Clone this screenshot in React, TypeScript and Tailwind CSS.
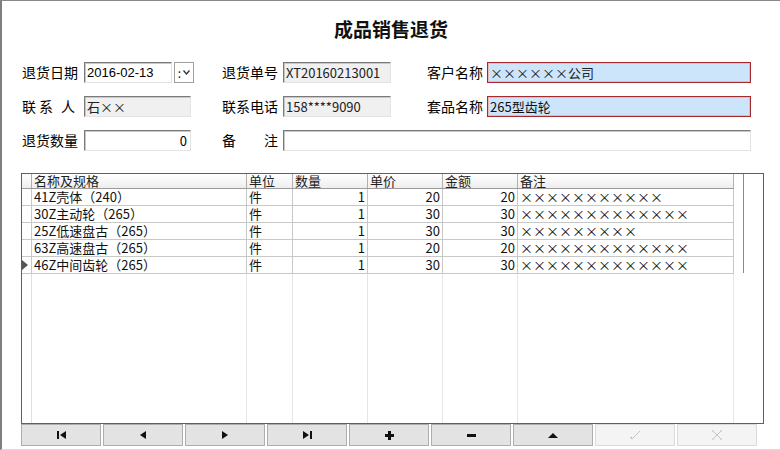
import React from "react";

const cols = [
  { w: "w-[215px]", align: "text-left" },
  { w: "w-[46px]", align: "text-left" },
  { w: "w-[75px]", align: "text-right" },
  { w: "w-[75px]", align: "text-right" },
  { w: "w-[75px]", align: "text-right" },
  { w: "w-[216px]", align: "text-left" },
];

const headers = ["名称及规格", "单位", "数量", "单价", "金额", "备注"];

const rows = [
  ["41Z壳体（240）", "件", "1", "20", "20", "×××××××××××"],
  ["30Z主动轮（265）", "件", "1", "30", "30", "×××××××××××××"],
  ["25Z低速盘古（265）", "件", "1", "30", "30", "×××××××××"],
  ["63Z高速盘古（265）", "件", "1", "20", "20", "×××××××××××××"],
  ["46Z中间齿轮（265）", "件", "1", "30", "30", "×××××××××××××"],
];

const sunken =
  "h-[21px] border border-t-[#7a7a7a] border-l-[#7a7a7a] border-r-[#e3e3e3] border-b-[#e3e3e3] shadow-[inset_1px_1px_0_#c8c8c8] text-[13px] leading-[19px] px-[2px] whitespace-nowrap";

function Label({ children, className = "" }: { children: React.ReactNode; className?: string }) {
  return (
    <div className={`w-[56px] shrink-0 text-[14px] leading-[21px] text-black ${className}`}>
      {children}
    </div>
  );
}

function NavIcon({ kind }: { kind: string }) {
  const c = "#111";
  const faded = "#c4c4c4";
  switch (kind) {
    case "first":
      return (
        <svg width="9" height="8" viewBox="0 0 9 8">
          <rect x="0" y="0" width="2" height="8" fill={c} />
          <path d="M9 0 L3 4 L9 8 Z" fill={c} />
        </svg>
      );
    case "prev":
      return (
        <svg width="6" height="8" viewBox="0 0 6 8">
          <path d="M6 0 L0 4 L6 8 Z" fill={c} />
        </svg>
      );
    case "next":
      return (
        <svg width="6" height="8" viewBox="0 0 6 8">
          <path d="M0 0 L6 4 L0 8 Z" fill={c} />
        </svg>
      );
    case "last":
      return (
        <svg width="9" height="8" viewBox="0 0 9 8">
          <path d="M0 0 L6 4 L0 8 Z" fill={c} />
          <rect x="7" y="0" width="2" height="8" fill={c} />
        </svg>
      );
    case "add":
      return (
        <svg width="9" height="9" viewBox="0 0 9 9">
          <rect x="3" y="0" width="3" height="9" fill={c} />
          <rect x="0" y="3" width="9" height="3" fill={c} />
        </svg>
      );
    case "del":
      return (
        <svg width="9" height="3" viewBox="0 0 9 3">
          <rect x="0" y="0" width="9" height="3" fill={c} />
        </svg>
      );
    case "up":
      return (
        <svg width="10" height="5" viewBox="0 0 10 5">
          <path d="M0 5 L5 0 L10 5 Z" fill={c} />
        </svg>
      );
    case "ok":
      return (
        <svg width="12" height="10" viewBox="0 0 12 10">
          <path d="M1 7 L3 9 L11 1" stroke={faded} strokeWidth="1" fill="none" />
          <path d="M2 7 L3 8" stroke={faded} strokeWidth="1" fill="none" />
        </svg>
      );
    default:
      return (
        <svg width="10" height="10" viewBox="0 0 10 10">
          <path d="M1 1 L9 9 M9 1 L1 9" stroke={faded} strokeWidth="1" fill="none" />
          <path d="M0 1 L2 1 M8 1 L10 1 M0 9 L2 9 M8 9 L10 9" stroke={faded} strokeWidth="1" />
        </svg>
      );
  }
}

const navs = ["first", "prev", "next", "last", "add", "del", "up", "ok", "cancel"];

export default function App() {
  return (
    <div className="w-[780px] h-[450px] bg-white overflow-hidden border-l-2 border-t border-b border-l-[#7f7f7f] border-t-[#8a8a8a] border-b-[#dcdcdc] flex flex-col font-['Liberation_Sans','Noto_Sans_CJK_SC',sans-serif] text-black">
      {/* 标题 */}
      <h1 className="mt-[15px] h-[26px] text-center text-[19px] leading-[26px] font-semibold font-['Noto_Sans_CJK_SC',sans-serif] text-[#111]">
        成品销售退货
      </h1>

      {/* 表头信息 */}
      <div className="mt-[20px] pl-[20px] flex flex-col gap-[13px] font-['Noto_Sans_CJK_SC',sans-serif]">
        <div className="flex items-center">
          <Label>退货日期</Label>
          <div className={`ml-[6px] w-[88px] bg-white ${sunken} font-['Liberation_Sans',sans-serif]`}>
            2016-02-13
          </div>
          <div className="ml-[2px] w-[20px] h-[21px] border border-[#a0a0a0] bg-white flex items-center justify-center gap-[2px] text-[12px] leading-none">
            <span className="text-[#222]">:</span>
            <svg width="7" height="5" viewBox="0 0 7 5">
              <path d="M0.5 0.5 L3.5 4 L6.5 0.5" stroke="#333" strokeWidth="1.3" fill="none" />
            </svg>
          </div>
          <Label className="ml-[28px]">退货单号</Label>
          <div className={`ml-[5px] w-[108px] bg-[#f0f0f0] ${sunken} text-[#222]`}>XT20160213001</div>
          <Label className="ml-[36px]">客户名称</Label>
          <div className="ml-[4px] w-[264px] h-[21px] border border-[#a8282e] shadow-[inset_0_0_0_1px_#e8b8c0] bg-[#cde5fb] text-[13px] leading-[19px] px-[2px] font-['Noto_Sans_CJK_SC',sans-serif] text-[#222]">
            ××××××公司
          </div>
        </div>

        <div className="flex items-center">
          <Label className="flex">
            <span>联</span>
            <span className="ml-[3px]">系</span>
            <span className="ml-[8px]">人</span>
          </Label>
          <div className={`ml-[6px] w-[107px] bg-[#f0f0f0] ${sunken} font-['Noto_Sans_CJK_SC',sans-serif] text-[#222]`}>
            石××
          </div>
          <Label className="ml-[31px]">联系电话</Label>
          <div className={`ml-[5px] w-[108px] bg-[#f0f0f0] ${sunken} text-[#222]`}>158****9090</div>
          <Label className="ml-[36px]">套品名称</Label>
          <div className="ml-[4px] w-[264px] h-[21px] border border-[#a8282e] shadow-[inset_0_0_0_1px_#e8b8c0] bg-[#cde5fb] text-[13px] leading-[19px] px-[2px] text-[#111]">
            265型齿轮
          </div>
        </div>

        <div className="flex items-center">
          <Label>退货数量</Label>
          <div className={`ml-[6px] w-[107px] bg-white ${sunken} text-right pr-[3px]`}>0</div>
          <Label className="ml-[31px] flex justify-between">
            <span>备</span>
            <span>注</span>
          </Label>
          <div className={`ml-[5px] w-[468px] bg-white ${sunken}`}></div>
        </div>
      </div>

      {/* 明细表格 */}
      <div className="mt-[22px] ml-[19px] w-[743px] h-[251px] border border-[#c8323e] flex font-['Noto_Sans_CJK_SC',sans-serif] text-[13px]">
        <div className="w-[712px] flex flex-col">
          <div className="flex h-[15px] border-b border-[#9a9a9a] bg-gradient-to-b from-white to-[#eeeeee]">
            <div className="w-[10px] border-r border-[#b0b0b0]"></div>
            {headers.map((h, i) => (
              <div
                key={h}
                className={`${cols[i].w} border-r border-[#b0b0b0] px-[2px] leading-[14px] text-[#222] whitespace-nowrap`}
              >
                {h}
              </div>
            ))}
          </div>
          {rows.map((r, ri) => (
            <div key={ri} className="flex h-[17px] border-b border-[#c8c8c8]">
              <div className="w-[10px] border-r border-[#c8c8c8] flex items-center">
                {ri === rows.length - 1 && (
                  <svg width="6" height="10" viewBox="0 0 6 10">
                    <path d="M0 0 L6 5 L0 10 Z" fill="#555" />
                  </svg>
                )}
              </div>
              {r.map((v, i) => (
                <div
                  key={i}
                  className={`${cols[i].w} ${cols[i].align} border-r border-[#c8c8c8] px-[2px] leading-[16px] text-[#111] whitespace-nowrap`}
                >
                  {v}
                </div>
              ))}
            </div>
          ))}
          <div className="flex flex-1">
            <div className="w-[10px] border-r border-[#e0e0e0]"></div>
            {cols.map((c, i) => (
              <div key={i} className={`${c.w} border-r border-[#e6e6e6]`}></div>
            ))}
          </div>
        </div>
        <div className="flex-1 pl-[9px]">
          <div className="w-px h-[99px] bg-[#8a8a8a]"></div>
        </div>
      </div>

      {/* 导航按钮 */}
      <div className="ml-[19px] flex gap-[2px]">
        {navs.map((n, i) => (
          <div
            key={n}
            className={`w-[80px] h-[22px] border flex items-center justify-center ${
              i >= 7 ? "bg-[#f4f4f4] border-[#dadada]" : "bg-[#e3e3e3] border-[#adadad]"
            }`}
          >
            <NavIcon kind={n} />
          </div>
        ))}
      </div>
    </div>
  );
}
